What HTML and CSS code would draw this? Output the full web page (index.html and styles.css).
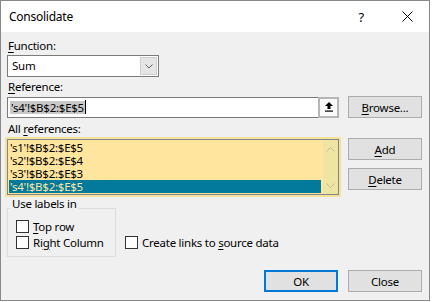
FILE: index.html
```html
<!DOCTYPE html>
<html lang="en">
<head>
    <meta charset="UTF-8">
    <title>Consolidate</title>
    <link rel="stylesheet" href="styles.css">
</head>
<body>
    <div class="dialog">
        <!-- Title bar -->
        <div class="titlebar">
            <span class="title">Consolidate</span>
            <span class="help">?</span>
            <svg class="close-x" width="11" height="11" viewBox="0 0 11 11">
                <path d="M0.5 0.5 L10.5 10.5 M10.5 0.5 L0.5 10.5" stroke="#000" stroke-width="1" fill="none"/>
            </svg>
        </div>

        <div class="content">
            <div class="label"><u>F</u>unction:</div>
            <div class="select">
                <span class="select-value">Sum</span>
                <span class="select-btn">
                    <svg width="8" height="5" viewBox="0 0 8 5"><path d="M0.5 0.5 L4 4 L7.5 0.5" stroke="#606060" fill="none"/></svg>
                </span>
            </div>

            <div class="label label-ref"><u>R</u>eference:</div>
            <div class="ref-row">
                <div class="refbox">
                    <span class="ref-text"><span class="ref-sel">'s4'!$B$2:$E$5</span><span class="caret"></span></span>
                    <span class="collapse-btn">
                        <svg width="8" height="10" viewBox="0 0 8 10">
                            <path d="M4 0 L8 4 H5.5 V7 H2.5 V4 H0 Z" fill="#000"/>
                            <rect x="0" y="8.5" width="8" height="1.2" fill="#000"/>
                        </svg>
                    </span>
                </div>
                <button class="btn"><u>B</u>rowse...</button>
            </div>

            <div class="label label-all">All <u>r</u>eferences:</div>
            <div class="list-row">
                <div class="listbox">
                    <ul class="items">
                        <li>'s1'!$B$2:$E$5</li>
                        <li>'s2'!$B$2:$E$4</li>
                        <li>'s3'!$B$2:$E$3</li>
                        <li class="selected">'s4'!$B$2:$E$5</li>
                    </ul>
                    <div class="scroll">
                        <svg width="9" height="5" viewBox="0 0 9 5"><path d="M0.5 4.5 L4.5 0.5 L8.5 4.5" stroke="#c2bd96" fill="none"/></svg>
                        <svg width="9" height="5" viewBox="0 0 9 5"><path d="M0.5 0.5 L4.5 4.5 L8.5 0.5" stroke="#c2bd96" fill="none"/></svg>
                    </div>
                </div>
                <div class="btn-col">
                    <button class="btn"><u>A</u>dd</button>
                    <button class="btn"><u>D</u>elete</button>
                </div>
            </div>

            <div class="options">
                <fieldset class="group">
                    <legend>Use labels in</legend>
                    <div class="group-rows">
                        <label class="check"><span class="box"></span><span><u>T</u>op row</span></label>
                        <label class="check"><span class="box"></span><span>Ri<u>g</u>ht Column</span></label>
                    </div>
                </fieldset>
                <label class="check check-links"><span class="box"></span><span>Create links to <u>s</u>ource data</span></label>
            </div>

            <div class="footer">
                <button class="btn btn-default">OK</button>
                <button class="btn">Close</button>
            </div>
        </div>
    </div>
</body>
</html>
```

FILE: styles.css
```css
* {
    box-sizing: border-box;
}
body {
    margin: 0;
    background: #fff;
    font-family: "Noto Sans", sans-serif;
    font-size: 11.5px;
    letter-spacing: -0.25px;
    color: #000;
}
u {
    text-underline-offset: 2px;
}
.dialog {
    width: 430px;
    height: 301px;
    border: 1px solid #888;
    background: #f0f0f0;
}
.titlebar {
    height: 31px;
    background: #fff;
    display: flex;
    align-items: center;
    padding: 0 16px 0 8px;
    line-height: 16px;
    font-size: 12px;
}
.title {
    flex: 1;
}
.help {
    font-size: 13px;
    margin-right: 38px;
}
.content {
    padding: 6px 7px 0 6px;
}
.label {
    line-height: 16px;
    padding-left: 1px;
}
.label-ref {
    margin-top: 2px;
}
.label-all {
    margin-top: 3px;
}
.select {
    width: 152px;
    height: 22px;
    margin-top: 1px;
    border: 1px solid #7a7a7a;
    background: #fff;
    display: flex;
}
.select-value {
    flex: 1;
    padding-left: 4px;
    line-height: 20px;
}
.select-btn {
    width: 17px;
    margin: 1px;
    border: 1px solid #cfcfcf;
    background: #e5e5e5;
    display: flex;
    align-items: center;
    justify-content: center;
}
.ref-row {
    display: flex;
    align-items: center;
    gap: 9px;
    margin-top: 1px;
}
.refbox {
    width: 332px;
    height: 21px;
    border: 1px solid #7a7a7a;
    background: #fff;
    display: flex;
}
.ref-text {
    flex: 1;
    display: flex;
    align-items: center;
    padding-left: 2px;
}
.ref-sel {
    background: #c8c8c8;
    line-height: 13px;
    padding: 0 1px;
}
.caret {
    width: 1px;
    height: 14px;
    background: #000;
}
.collapse-btn {
    width: 21px;
    margin: -1px -1px -1px 0;
    border: 2px solid #b6b6b6;
    background: #fafafa;
    display: flex;
    align-items: center;
    justify-content: center;
}
.btn {
    width: 74px;
    height: 22px;
    border: 1px solid #adadad;
    background: #e1e1e1;
    font: inherit;
    letter-spacing: inherit;
    color: #000;
    padding: 0;
}
.btn-default {
    border: 2px solid #0078d7;
}
.list-row {
    display: flex;
    gap: 9px;
    margin-top: 1px;
}
.listbox {
    width: 332px;
    height: 56px;
    margin-top: 1px;
    border: 1px solid #858585;
    box-shadow: 0 0 0 2px #f2e29e;
    background: #ffe59e;
    display: flex;
    padding: 1px 0 1px 1px;
}
.items {
    list-style: none;
    margin: 0 2px 0 0;
    padding: 0;
    flex: 1;
}
.items li {
    height: 13px;
    line-height: 13px;
    padding-left: 1px;
    white-space: nowrap;
}
.items li.selected {
    background: #03799b;
    color: #fde6a4;
}
.scroll {
    width: 15px;
    margin-top: -1px;
    margin-bottom: -1px;
    background: #efe5a3;
    display: flex;
    flex-direction: column;
    justify-content: space-between;
    align-items: center;
    padding: 7px 0 6px;
}
.btn-col {
    display: flex;
    flex-direction: column;
    gap: 8px;
}
.options {
    display: flex;
    align-items: flex-end;
    margin-top: 1px;
}
.group {
    width: 109px;
    margin: 0;
    padding: 0 0 6px 0;
    border: 1px solid #dcdcdc;
    min-width: 0;
}
.group legend {
    margin-left: 2px;
    padding: 0 2px 8px;
    line-height: 16px;
}
.group-rows {
    padding-left: 8px;
    margin-top: -2px;
}
.check {
    display: flex;
    align-items: center;
    gap: 4px;
    height: 16px;
    white-space: nowrap;
}
.box {
    width: 13px;
    height: 13px;
    border: 1px solid #333;
    background: #fff;
    flex: none;
}
.check-links {
    margin: 0 0 7px 9px;
}
.footer {
    display: flex;
    justify-content: flex-end;
    gap: 10px;
    margin-top: 13px;
}
```
